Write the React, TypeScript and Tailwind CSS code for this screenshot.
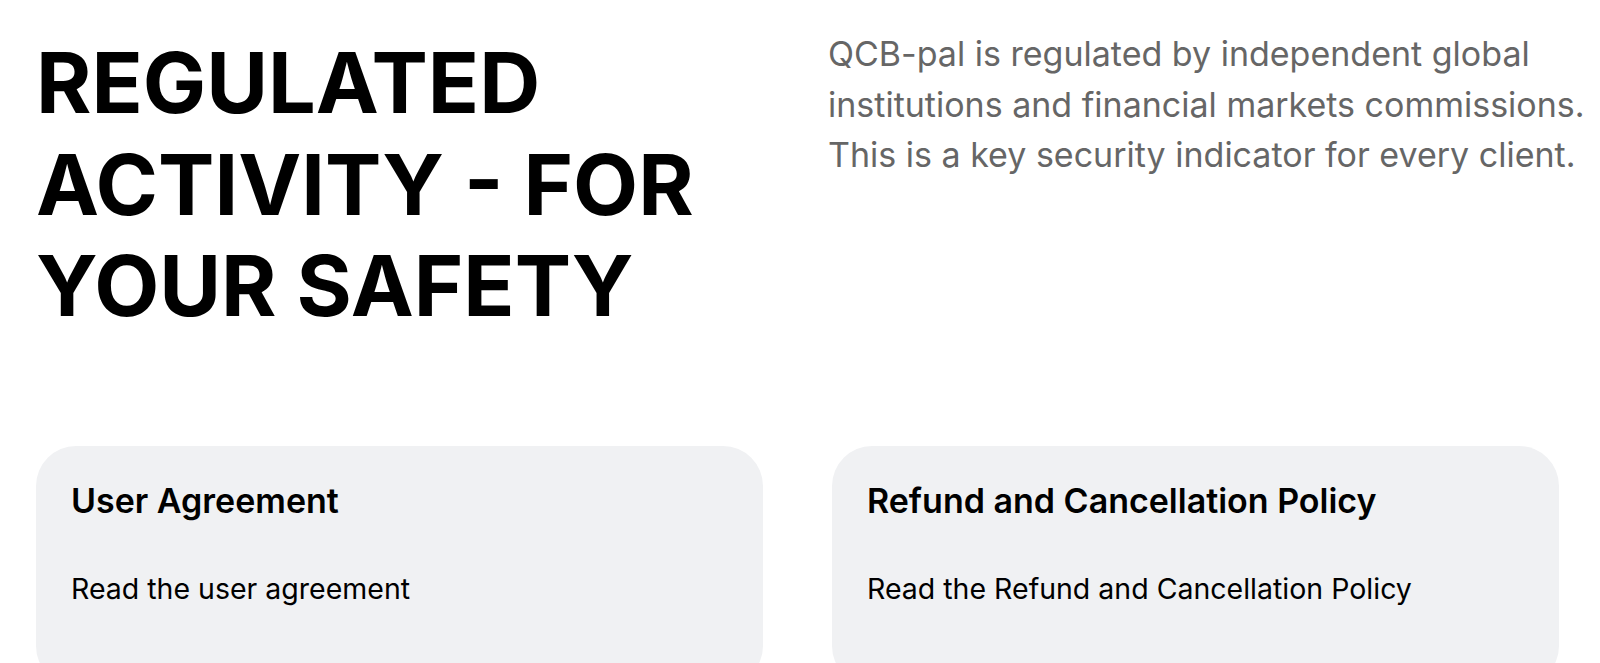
const docs = [
  { title: "User Agreement", link: "Read the user agreement" },
  { title: "Refund and Cancellation Policy", link: "Read the Refund and Cancellation Policy" },
];

function DocCard({ title, link }: { title: string; link: string }) {
  return (
    <div className="flex h-[240px] flex-col rounded-[40px] bg-[#f0f1f3] pt-[33px] pl-[35px]">
      <h3 className="text-[34px] font-semibold leading-[1.3] text-black">{title}</h3>
      <a href="#" className="mt-[45px] text-[28.5px] leading-[1.5] text-black">
        {link}
      </a>
    </div>
  );
}

export default function App() {
  return (
    <div className="h-[663px] overflow-hidden bg-white font-['Inter','Liberation_Sans',sans-serif]">
      <div className="pt-[29px] pl-[36px]">
        <div className="flex items-start">
          <h2 className="w-[792px] shrink-0 pt-[3px] text-[84.5px] font-bold uppercase leading-[101.5px] text-black">
            Regulated activity - for your safety
          </h2>
          <p className="w-[772px] shrink-0 whitespace-nowrap text-[34px] leading-[50.5px] text-[#666666]">
            QCB-pal is regulated by independent global
            <br />
            institutions and financial markets commissions.
            <br />
            This is a key security indicator for every client.
          </p>
        </div>
        <div className="mt-[109px] grid w-[1523px] grid-cols-2 gap-[69px]">
          {docs.map((d) => (
            <DocCard key={d.title} title={d.title} link={d.link} />
          ))}
        </div>
      </div>
    </div>
  );
}
